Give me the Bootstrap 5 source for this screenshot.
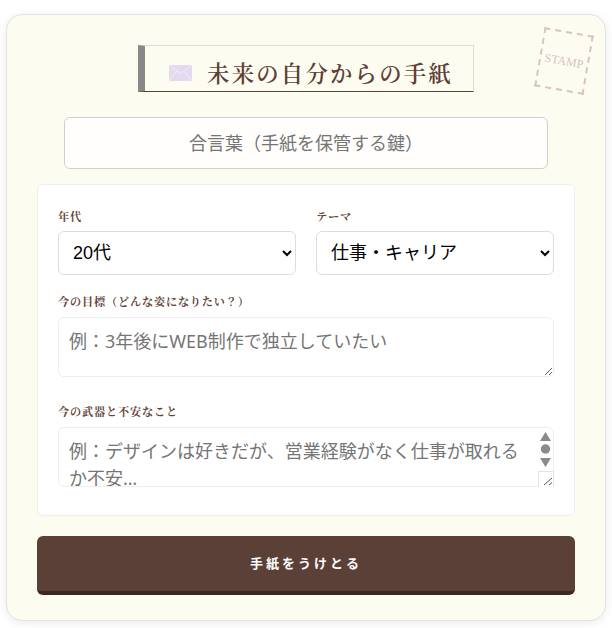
<!DOCTYPE html>
<html lang="ja">
<head>
    <meta charset="UTF-8">
    <meta name="viewport" content="width=device-width, initial-scale=1.0">
    <title>未来の自分からの手紙</title>
    <link href="https://cdn.jsdelivr.net/npm/bootstrap@5.3.0/dist/css/bootstrap.min.css" rel="stylesheet">
    <style>
        body { background: #fff; font-family: "Noto Sans", "Noto Sans CJK JP", sans-serif; padding: 14px 6px 7px; }
        .letter-paper { position: relative; background: #fcfcf1; border: 1px solid #e2e2e0; border-radius: 16px; box-shadow: 0 2px 10px rgba(0,0,0,.08); padding: 30px 30px 25px; }
        .stamp-mark { position: absolute; top: 16px; right: 16px; width: 50px; height: 60px; border: 2px dashed #d8c4c2; transform: rotate(10deg); color: #d8c2c4; font: 12px "Liberation Serif", serif; display: flex; align-items: center; justify-content: center; }
        .title-box { width: 336px; height: 47px; border: 1px solid #ddd; border-left: 7px solid #888; border-bottom: 1px solid #5d4037; color: #5d4037; font: 600 22.4px "Noto Serif CJK JP", "Noto Sans CJK JP", serif; letter-spacing: 2.2px; padding: 7px 0 0 4px; gap: 15px; }
        .title-box svg { margin-top: 2px; }
        .key-input.form-control { width: 484px; height: 52px; margin: 25px auto 15px; border: 1px solid #d7ccc8; border-radius: 6px; background: #fffefc; text-align: center; font-size: 18px; }
        .form-panel { background: #fff; border: 1px solid #eee; border-radius: 6px; padding: 23px 20px 0; height: 332px; }
        .pick-grid { display: grid; grid-template-columns: 1fr 1fr; gap: 20px; margin-bottom: 18px; }
        .field-label { color: #654538; font: 700 11.2px "Noto Serif CJK JP", "Noto Sans CJK JP", serif; letter-spacing: .8px; margin-bottom: 8px; line-height: 16px; display: block; }
        .pick-grid .field-label { margin-bottom: 7px; }
        .form-select.pick { appearance: auto; background-image: none; height: 44px; border-color: #ddd; border-radius: 6px; font: 18px "Liberation Sans", "Noto Sans CJK JP", sans-serif; color: #000; padding: 0 4px 0 10px; }
        .note-area.form-control { height: 60px; border-color: #eee; border-radius: 6px; font-size: 18px; line-height: 1.5; padding: 10px; margin-bottom: 26px; }
        .note-scroll.form-control { padding-right: 24px; margin-bottom: 0; overflow: hidden; }
        .fake-scrollbar { position: absolute; top: 0; right: 0; pointer-events: none; }
        .form-control::placeholder { color: #757575; }
        .send-btn.btn { height: 59px; background: #5b4037; border: 0; border-bottom: 4px solid #3e2723; border-radius: 6px; color: #fff; font-weight: 700; font-size: 13px; letter-spacing: 3px; margin-top: 20px; }
    </style>
</head>
<body>
    <div class="letter-paper">
        <div class="stamp-mark">STAMP</div>
        <div class="title-box d-flex align-items-center justify-content-center mx-auto">
            <svg width="23" height="16" viewBox="0 0 23 16">
                <rect width="23" height="16" fill="#e4daf0"/>
                <path d="M0 0L11.500 9L23 0M0 16L8 6M23 16L15 6" fill="none" stroke="#f1ebf6"/>
            </svg>
            <span>未来の自分からの手紙</span>
        </div>
        <input class="form-control key-input d-block" placeholder="合言葉（手紙を保管する鍵）">
        <div class="form-panel">
            <div class="pick-grid">
                <div>
                    <label class="field-label">年代</label>
                    <select class="form-select pick"><option>20代</option></select>
                </div>
                <div>
                    <label class="field-label">テーマ</label>
                    <select class="form-select pick"><option>仕事・キャリア</option></select>
                </div>
            </div>
            <label class="field-label">今の目標（どんな姿になりたい？）</label>
            <textarea class="form-control note-area" placeholder="例：3年後にWEB制作で独立していたい"></textarea>
            <label class="field-label">今の武器と不安なこと</label>
            <div class="position-relative">
                <textarea class="form-control note-area note-scroll" placeholder="例：デザインは好きだが、営業経験がなく仕事が取れるか不安…"></textarea>
                <svg class="fake-scrollbar" width="17" height="60" viewBox="0 0 17 60">
                    <path d="M3 14L8.500 5L14 14Z" fill="#8b8b8b"/>
                    <circle cx="8.500" cy="22" r="4.700" fill="#8b8b8b"/>
                    <path d="M3 31L8.500 40L14 31Z" fill="#8b8b8b"/>
                    <rect x="1.500" y="44.500" width="15" height="16" fill="#fff" stroke="#e3e3e3"/>
                    <path d="M7 58L15 51M12 58L15 55.500" stroke="#555" stroke-width="1" fill="none"/>
                </svg>
            </div>
        </div>
        <button class="btn send-btn w-100">手紙をうけとる</button>
    </div>
</body>
</html>
